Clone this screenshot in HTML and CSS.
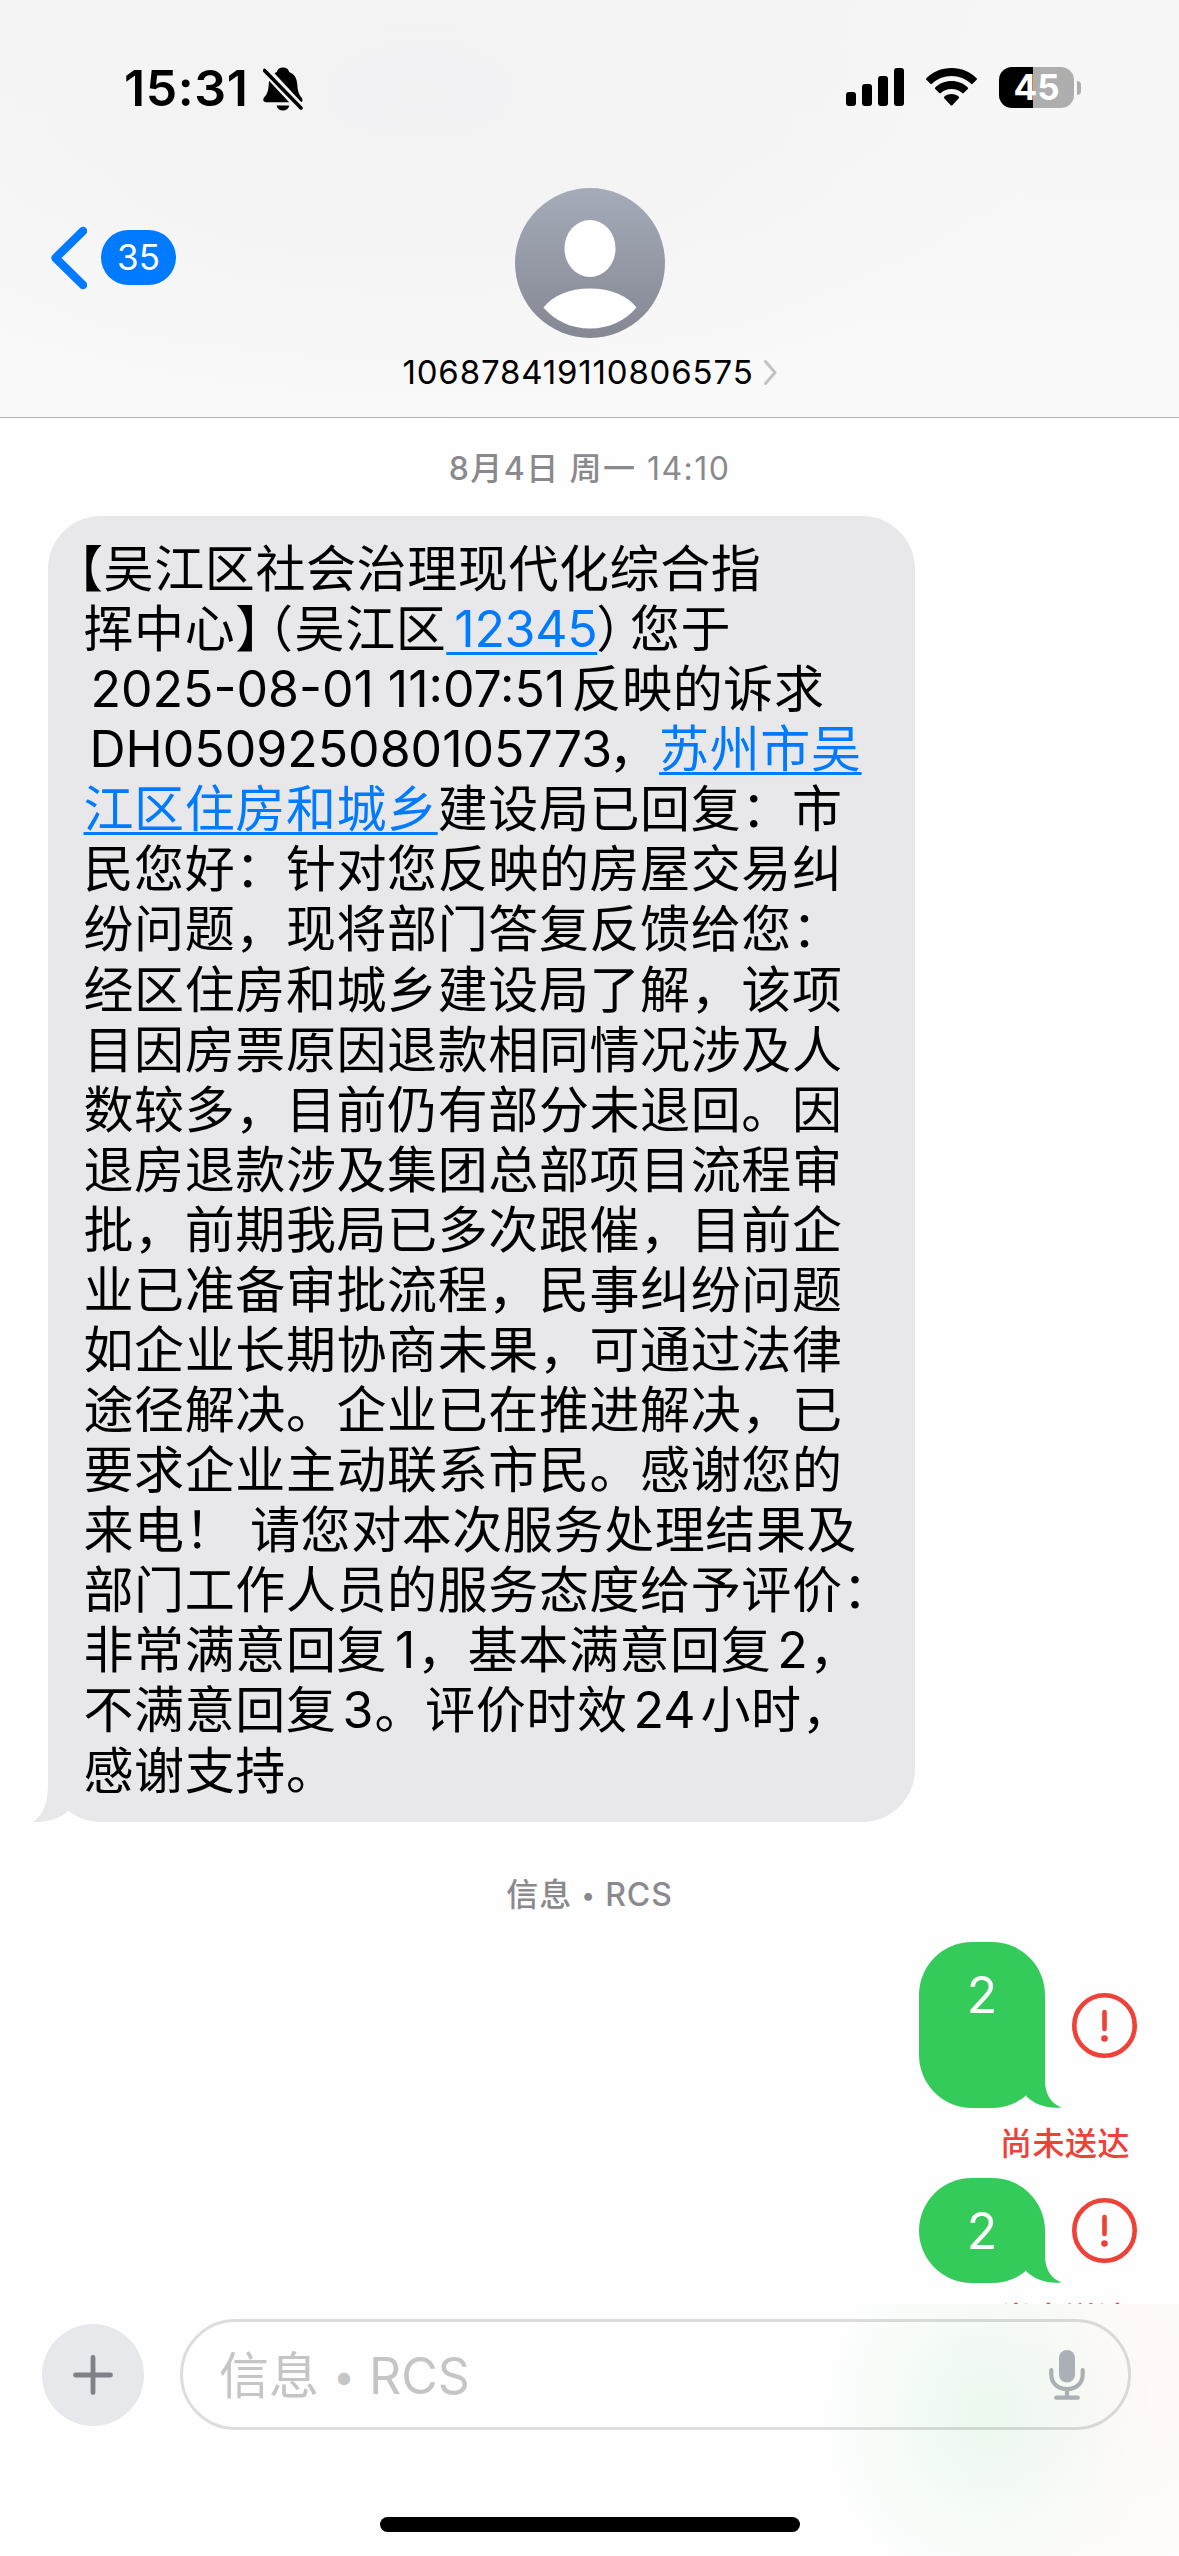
FILE: index.html
```html
<!DOCTYPE html>
<html lang="zh-CN">
<head>
<meta charset="utf-8">
<title>信息</title>
<link rel="stylesheet" href="styles.css">
</head>
<body>
<div class="phone">
  <header class="header">
    <div class="status">
      <div class="status-left">
        <span class="clock">15:31</span>
        <svg class="bell" width="40" height="44" viewBox="0 0 40 44">
          <path d="M20 0.5c3.600 0 5.600 2 6.200 4.400C31.500 7 34 11.500 34.300 17.500 34.600 25 36.500 28 38.500 30.500 40.500 33.500 39.300 35.300 36.500 35.300H3.300C0.500 35.300-.6 33 1 30.500 3.500 27.800 5.400 25 5.700 17.500 6 11.500 8.500 7 13.800 4.900 14.400 2.500 16.400.5 20 .5z"/>
          <path d="M13.500 38.500h12.800c-.8 3.200-3.200 5-6.400 5s-5.600-1.800-6.400-5z"/>
          <path class="bell-gap" d="M-1-.5 40 43.500"/>
          <path class="bell-slash" d="M1.500 3.500 38 41"/>
        </svg>
      </div>
      <div class="status-right">
        <svg class="signal" width="58" height="38" viewBox="0 0 58 38">
          <rect x="0" y="24" width="10" height="14" rx="3"/>
          <rect x="16" y="16" width="10" height="22" rx="3"/>
          <rect x="32" y="8" width="10" height="30" rx="3"/>
          <rect x="48" y="0" width="10" height="38" rx="3"/>
        </svg>
        <svg class="wifi" width="51" height="38" viewBox="0 0 51 38">
          <path d="M25.500 0C35.500 0 44.500 4 50.600 10.200c.5.5.5 1 0 1.500l-4 4.100c-.5.5-1.100.5-1.600 0C40 10.800 33 8 25.500 8S11 10.800 6 15.800c-.5.5-1.100.5-1.600 0l-4-4.100c-.5-.5-.5-1 0-1.500C6.500 4 15.500 0 25.500 0z"/>
          <path d="M25.500 13c6.300 0 12 2.400 16.300 6.400.5.500.5 1 0 1.500l-4.100 4.200c-.5.500-1 .5-1.500 0-2.900-2.600-6.600-4.100-10.700-4.100s-7.800 1.500-10.700 4.100c-.5.500-1 .5-1.500 0l-4.100-4.200c-.5-.5-.5-1 0-1.500C13.500 15.400 19.200 13 25.500 13z"/>
          <path d="M25.500 26c2.900 0 5.400 1 7.300 2.800.5.500.5 1 0 1.500l-6.500 6.900c-.5.500-1.100.5-1.600 0l-6.500-6.900c-.5-.5-.5-1 0-1.500 1.900-1.800 4.400-2.800 7.300-2.800z"/>
        </svg>
        <div class="battery"><span class="battery-body">45</span><span class="battery-nub"></span></div>
      </div>
    </div>
    <div class="nav">
      <div class="back">
        <svg width="38" height="66" viewBox="0 0 38 66"><path d="M34 6 6.500 33 34 60"/></svg>
        <span class="unread">35</span>
      </div>
      <div class="contact">
        <svg width="150" height="150" viewBox="0 0 150 150">
          <defs><linearGradient id="av" x1="0" y1="0" x2="0" y2="1"><stop offset="0" stop-color="#a5abb9"/><stop offset="1" stop-color="#858893"/></linearGradient></defs>
          <circle cx="75" cy="75" r="75" fill="url(#av)"/>
          <ellipse cx="75" cy="60.500" rx="25.500" ry="28.500" fill="#fff"/>
          <path d="M28.500 119.500C37 108 54 100.500 75 100.500S113 108 121.500 119.500C110 133 94 140.500 75 140.500S40 133 28.500 119.500z" fill="#fff"/>
        </svg>
        <div class="number"><span>106878419110806575</span><svg width="13" height="25" viewBox="0 0 13 25"><path d="M1.500 1.500 11 12.500 1.500 23.500"/></svg></div>
      </div>
    </div>
  </header>

  <main class="thread">
    <div class="stamp"><b>8月4日 周一</b> <span>14:10</span></div>
    <section class="bubble incoming">
      <div><i class="half first">【</i>吴江区社会治理现代化综合指</div>
      <div>挥中心<i class="half close">】</i><i class="half open">（</i>吴江区<a class="hotline">&#8198;12345</a><i class="half paren">）</i>您于</div>
      <div><span class="date">2025-08-01 11:07:51</span>反映的诉求</div>
      <div><span class="ticket">DH050925080105773</span>，<a>苏州市吴</a></div>
      <div><a>江区住房和城乡</a>建设局已回复：市</div>
      <div>民您好：针对您反映的房屋交易纠</div>
      <div>纷问题，现将部门答复反馈给您：</div>
      <div>经区住房和城乡建设局了解，该项</div>
      <div>目因房票原因退款相同情况涉及人</div>
      <div>数较多，目前仍有部分未退回。因</div>
      <div>退房退款涉及集团总部项目流程审</div>
      <div>批，前期我局已多次跟催，目前企</div>
      <div>业已准备审批流程，民事纠纷问题</div>
      <div>如企业长期协商未果，可通过法律</div>
      <div>途径解决。企业已在推进解决，已</div>
      <div>要求企业主动联系市民。感谢您的</div>
      <div>来电！ 请您对本次服务处理结果及</div>
      <div>部门工作人员的服务态度给予评价：</div>
      <div>非常满意回复<span class="digit">1</span>，基本满意回复<span class="digit wide">2</span>，</div>
      <div>不满意回复<span class="digit wide">3</span>。评价时效<span class="hours">24</span>小时，</div>
      <div>感谢支持。</div>
      <svg class="tail" width="52" height="50" viewBox="0 0 52 50"><path d="M15 0V12C15 30 11 42 0 50 14 50.500 27 47 35 39L52 20V0z" fill="#e8e8ea"/><path d="M0 50C14 50.500 27 47 35 39 39 44 45 48 52 50z" fill="#fefefe"/></svg>
    </section>
    <div class="stamp service"><b>信息 <i class="dot-sep">•</i> RCS</b></div>

    <section class="sent tall">
      <div class="bubble outgoing">2<svg class="tail" width="46" height="56" viewBox="0 0 46 56"><path d="M29 0V28C29 41 34 51 45.500 55.500 32 57 19 53 10 44z"/></svg></div>
      <svg class="alert" width="65" height="65" viewBox="0 0 65 65"><circle cx="32.500" cy="32.500" r="30.200"/><path d="M32.500 19V36"/><circle class="dot" cx="32.500" cy="45.500" r="3.300"/></svg>
    </section>
    <div class="failed">尚未送达</div>
    <section class="sent">
      <div class="bubble outgoing">2<svg class="tail" width="46" height="56" viewBox="0 0 46 56"><path d="M29 0V28C29 41 34 51 45.500 55.500 32 57 19 53 10 44z"/></svg></div>
      <svg class="alert" width="65" height="65" viewBox="0 0 65 65"><circle cx="32.500" cy="32.500" r="30.200"/><path d="M32.500 19V36"/><circle class="dot" cx="32.500" cy="45.500" r="3.300"/></svg>
    </section>
    <div class="failed">尚未送达</div>
  </main>

  <footer class="composer">
    <div class="compose-row">
      <div class="plus"><svg width="40" height="40" viewBox="0 0 40 40"><path d="M20 2.500v35M2.500 20h35"/></svg></div>
      <div class="field">
        <span class="hint">信息 <i class="dot-sep">•</i> RCS</span>
        <svg width="36" height="50" viewBox="0 0 36 50"><rect x="10" y="0" width="16" height="32.500" rx="8"/><path d="M2.300 20v4.500C2.300 33.500 9 39 18 39s15.700-5.500 15.700-14.500V20M18 39v8.500M7.200 47.700h21.600"/></svg>
      </div>
    </div>
    <div class="home"></div>
  </footer>
</div>
</body>
</html>
```

FILE: styles.css
```css
* { box-sizing: border-box; }
body { margin: 0; background: #fff; }
svg { display: block; flex: none; }
.phone {
  width: 1179px;
  height: 2556px;
  display: flex;
  flex-direction: column;
  overflow: hidden;
  background: #fefefe;
  color: #000;
  font-family: Inter, "Noto Sans CJK SC", sans-serif;
  text-spacing-trim: space-all;
}

/* header */
.header {
  flex: none;
  height: 418px;
  border-bottom: 1px solid #b2b2b3;
  background:
    radial-gradient(ellipse 620px 330px at 420px 90px, rgba(240, 240, 242, .8), rgba(242, 242, 243, 0)),
    linear-gradient(#f6f6f6, #f9f9f9);
}
.status {
  height: 176px;
  padding: 67px 98px 0 124px;
  display: flex;
  justify-content: space-between;
}
.status-left, .status-right { display: flex; align-items: flex-start; }
.clock {
  width: 139px;
  font-size: 50px;
  font-weight: 600;
  line-height: 42px;
  letter-spacing: .6px;
}
.bell-gap { stroke: #f3f3f4; stroke-width: 9; fill: none; }
.bell-slash { stroke: #000; stroke-width: 3.600; stroke-linecap: round; fill: none; }
.signal { margin: 1px 22px 0 0; }
.wifi { margin: 1px 22px 0 0; }
.battery { display: flex; align-items: center; gap: 3px; }
.battery-body {
  width: 75px;
  height: 41px;
  border-radius: 13px;
  background: linear-gradient(90deg, #000 34px, #aeaeae 34px);
  color: #fff;
  font-size: 35px;
  font-weight: 700;
  line-height: 41px;
  text-align: center;
}
.battery-nub { width: 4px; height: 14px; border-radius: 0 4px 4px 0; background: #aeaeae; }
.nav { display: grid; grid-template-columns: 376px 1fr 376px; }
.back { display: flex; align-items: center; height: 66px; padding-left: 49px; margin-top: 49px; }
.back path { fill: none; stroke: #007aff; stroke-width: 8.500; stroke-linecap: round; stroke-linejoin: round; }
.unread {
  width: 75px;
  height: 55px;
  margin: -1px 0 0 14px;
  border-radius: 28px;
  background: #007aff;
  color: #fff;
  font-size: 35px;
  line-height: 54px;
  text-align: center;
}
.contact { display: flex; flex-direction: column; align-items: center; padding-top: 12px; }
.number { display: flex; align-items: center; gap: 10px; height: 40px; margin: 14px 0 0 0; font-size: 33px; letter-spacing: .83px; white-space: nowrap; }
.number path { fill: none; stroke: #c2c2c4; stroke-width: 3; stroke-linecap: round; stroke-linejoin: round; }

/* conversation */
.thread { flex: none; height: 1886px; overflow: hidden; display: flex; flex-direction: column; }
.thread > * { flex: none; }
.stamp {
  height: 48px;
  margin-top: 27px;
  text-align: center;
  color: #8a8a8e;
  font-size: 32px;
  line-height: 48px;
  letter-spacing: 1.450px;
}
.stamp b { font-weight: 500; }
.bubble { position: relative; font-size: 50px; line-height: 60.080px; border-radius: 53px; }
.incoming {
  align-self: flex-start;
  width: 867px;
  height: 1306px;
  margin: 23px 0 0 48px;
  padding: 23px 0 0 35.500px;
  background: #e8e8ea;
  letter-spacing: .6px;
  white-space: nowrap;
}
.incoming a { color: #007aff; text-decoration: underline; text-decoration-thickness: 3px; text-underline-offset: 5px; }
.half { font-style: normal; font-feature-settings: "halt"; }
.half.first { margin-left: -5.500px; }
.half.open { margin: 0 1px 0 7px; }
.half.paren { margin: 0 8px 0 -2px; }
.hotline, .date, .ticket, .digit, .hours { display: inline-block; letter-spacing: 0; }
.hotline { width: 152px; white-space: pre; letter-spacing: -.3px; }
.date { width: 488px; padding-left: 7px; }
.ticket { width: 525px; padding-left: 6px; }
.digit { width: 30px; padding-left: 8px; }
.digit.wide { width: 38px; padding-left: 6px; }
.hours { width: 73px; padding-left: 6px; }
.tail { position: absolute; bottom: 0; }
.incoming .tail { left: -15px; }
.stamp.service { margin-top: 49px; letter-spacing: .9px; }
.dot-sep { display: inline-block; font-style: normal; font-size: .78em; transform: translateY(-.1em); }
.sent { display: flex; justify-content: flex-end; align-items: center; gap: 27px; height: 105px; margin: 10px 42px 0 0; }
.sent.tall { height: 166px; margin-top: 23px; }
.outgoing {
  width: 126px;
  height: 100%;
  padding-top: 23px;
  background: #35cb5b;
  color: #fff;
  text-align: center;
}
.outgoing .tail { right: -17px; }
.outgoing .tail path { fill: #35cb5b; }
.alert { fill: none; stroke: #ee4138; stroke-width: 4.600; stroke-linecap: round; }
.alert .dot { fill: #ee4138; stroke: none; }
.failed { height: 48px; margin: 12px 49px 0 0; text-align: right; color: #ee4138; font-size: 32px; font-weight: 500; line-height: 48px; letter-spacing: .5px; }

/* composer */
.composer {
  height: 252px;
  padding: 15px 48px 0 42px;
  background:
    radial-gradient(ellipse 170px 190px at 985px 110px, rgba(230, 247, 234, .75), rgba(250, 255, 251, 0)),
    radial-gradient(ellipse 200px 260px at 1130px 80px, rgba(255, 246, 243, .7), rgba(255, 252, 251, 0)),
    #fefefe;
}
.compose-row { display: flex; align-items: center; height: 111px; gap: 36px; }
.plus { width: 102px; height: 102px; border-radius: 50%; background: #e7e8eb; display: grid; place-items: center; }
.plus path { fill: none; stroke: #7f8088; stroke-width: 4.800; stroke-linecap: round; }
.field {
  flex: 1;
  height: 111px;
  border: 3px solid rgba(0, 0, 0, .13);
  border-radius: 56px;
  padding: 0 43px 0 36px;
  display: flex;
  align-items: center;
  justify-content: space-between;
}
.hint { color: #c5c5c7; font-size: 50px; margin-top: -6px; }
.field svg { fill: none; stroke: #aab0b5; stroke-width: 4.200; stroke-linecap: round; }
.field rect { fill: #aab0b5; stroke: none; }
.home { width: 420px; height: 15px; margin: 87px 0 0 338px; border-radius: 8px; background: #000; }
```
